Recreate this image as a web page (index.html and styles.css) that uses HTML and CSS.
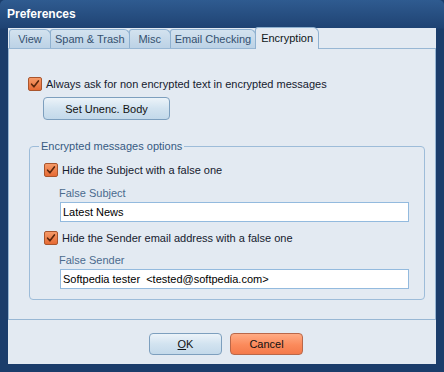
FILE: index.html
```html
<!DOCTYPE html>
<html>
<head>
<meta charset="utf-8">
<link rel="stylesheet" href="styles.css">
</head>
<body>
<div class="window">
  <div class="titlebar">Preferences</div>
  <div class="client">
    <div class="tabs">
      <div class="tab">View</div>
      <div class="tab">Spam &amp; Trash</div>
      <div class="tab">Misc</div>
      <div class="tab">Email Checking</div>
      <div class="tab active">Encryption</div>
    </div>
    <div class="panel">
      <div class="check-row">
        <span class="checkbox"><svg width="14" height="14" viewBox="0 0 14 14"><path d="M3.6 7.2 L5.9 9.8 L10.4 3.9" fill="none" stroke="#5b260c" stroke-width="1.6" stroke-linecap="round" stroke-linejoin="round"/></svg></span>
        <span>Always ask for non encrypted text in encrypted messages</span>
      </div>
      <button class="btn btn-blue btn-body">Set Unenc. Body</button>
      <fieldset class="group">
        <legend>Encrypted messages options</legend>
        <div class="check-row">
          <span class="checkbox"><svg width="14" height="14" viewBox="0 0 14 14"><path d="M3.6 7.2 L5.9 9.8 L10.4 3.9" fill="none" stroke="#5b260c" stroke-width="1.6" stroke-linecap="round" stroke-linejoin="round"/></svg></span>
          <span>Hide the Subject with a false one</span>
        </div>
        <div class="field">
          <div class="field-label">False Subject</div>
          <input class="text-input" type="text" value="Latest News">
        </div>
        <div class="check-row second">
          <span class="checkbox"><svg width="14" height="14" viewBox="0 0 14 14"><path d="M3.6 7.2 L5.9 9.8 L10.4 3.9" fill="none" stroke="#5b260c" stroke-width="1.6" stroke-linecap="round" stroke-linejoin="round"/></svg></span>
          <span>Hide the Sender email address with a false one</span>
        </div>
        <div class="field">
          <div class="field-label second-label">False Sender</div>
          <input class="text-input" type="text" value="Softpedia tester  <tested@softpedia.com>">
        </div>
      </fieldset>
    </div>
    <div class="footer">
      <button class="btn btn-blue btn-dlg"><u>O</u>K</button>
      <button class="btn btn-orange btn-dlg">Cancel</button>
    </div>
  </div>
</div>
</body>
</html>
```
FILE: styles.css
```css
* { box-sizing: border-box; }
html, body { margin: 0; padding: 0; background: #1b3d6b; }
body {
  font-family: "Liberation Sans", Arial, sans-serif;
  font-size: 11px;
  color: #15202e;
}
.window {
  width: 444px;
  height: 372px;
  border-radius: 5px 5px 0 0;
  display: flex;
  flex-direction: column;
  background: linear-gradient(#2f5b90 0, #1f4373 28px, #1b3d6b 29px);
}
.titlebar {
  height: 28px;
  padding-left: 7px;
  line-height: 28px;
  font-weight: bold;
  font-size: 12px;
  color: #ffffff;
}
.client {
  margin: 0 8px;
  height: 336px;
  background: #e3eaf2;
  display: flex;
  flex-direction: column;
}
.tabs {
  display: flex;
  align-items: flex-end;
  height: 20px;
  padding-left: 1px;
}
.tab {
  height: 19px;
  min-width: 42px;
  text-align: center;
  line-height: 18px;
  padding: 0 4px;
  border: 1px solid #8fb1d0;
  border-bottom: none;
  border-radius: 3px 6px 0 0;
  background: linear-gradient(#d3e2ef, #bcd2e6);
  color: #34506f;
  margin-right: -1px;
}
.tab.active {
  height: 22px;
  line-height: 20px;
  margin-bottom: -1px;
  background: #e3eaf2;
  color: #0f1620;
  position: relative;
  z-index: 1;
  padding: 0 5px;
}
.panel {
  height: 272px;
  border: 1px solid #98b7d4;
  padding: 28px 10px 0 19px;
  display: flex;
  flex-direction: column;
  align-items: flex-start;
}
.check-row {
  display: flex;
  align-items: center;
  gap: 4px;
  height: 14px;
  line-height: 14px;
  white-space: nowrap;
}
.checkbox {
  width: 14px;
  height: 14px;
  flex: none;
  border: 1px solid #a9552d;
  border-radius: 2px;
  background: linear-gradient(#f59a68, #e66a34);
  display: flex;
}
.checkbox svg { display: block; margin: -1px; }
.btn {
  font-family: "Liberation Sans", Arial, sans-serif;
  font-size: 11px;
  color: #111;
  border-radius: 4px;
  padding: 0;
}
.btn-blue {
  border: 1px solid #7d9fbe;
  background: linear-gradient(#ecf3f9, #d2e3f0 50%, #c3d9ea);
}
.btn-orange {
  border: 1px solid #b9684a;
  background: linear-gradient(#ffab84, #fb8a5b 55%, #f47a4b);
}
.btn-body {
  width: 127px;
  height: 23px;
  margin: 6px 0 0 15px;
}
.group {
  margin: 19px 0 0 1px;
  width: 396px;
  border: 1px solid #9dbcd9;
  border-radius: 4px;
  padding: 10px 10px 10px 14px;
}
.group legend {
  padding: 0 2px;
  margin-left: -5px;
  line-height: 14px;
  color: #365a83;
}
.field {
  margin-left: 15px;
  display: flex;
  flex-direction: column;
  align-items: flex-start;
}
.field-label {
  margin-top: 9px;
  height: 14px;
  line-height: 14px;
  color: #4b6b8e;
}
.field-label.second-label { margin-top: 8px; }
.check-row.second { margin-top: 9px; }
.text-input {
  margin: 2px 0 0 1px;
  width: 349px;
  height: 20px;
  border: 1px solid #93bade;
  background: #fff;
  padding: 0 2px;
  font-family: "Liberation Sans", Arial, sans-serif;
  font-size: 11px;
  color: #000;
  outline: none;
}
.footer {
  flex: 1;
  display: flex;
  justify-content: center;
  align-items: flex-start;
  gap: 8px;
  padding: 13px 0 0 8px;
}
.btn-dlg {
  width: 73px;
  height: 22px;
}
```
